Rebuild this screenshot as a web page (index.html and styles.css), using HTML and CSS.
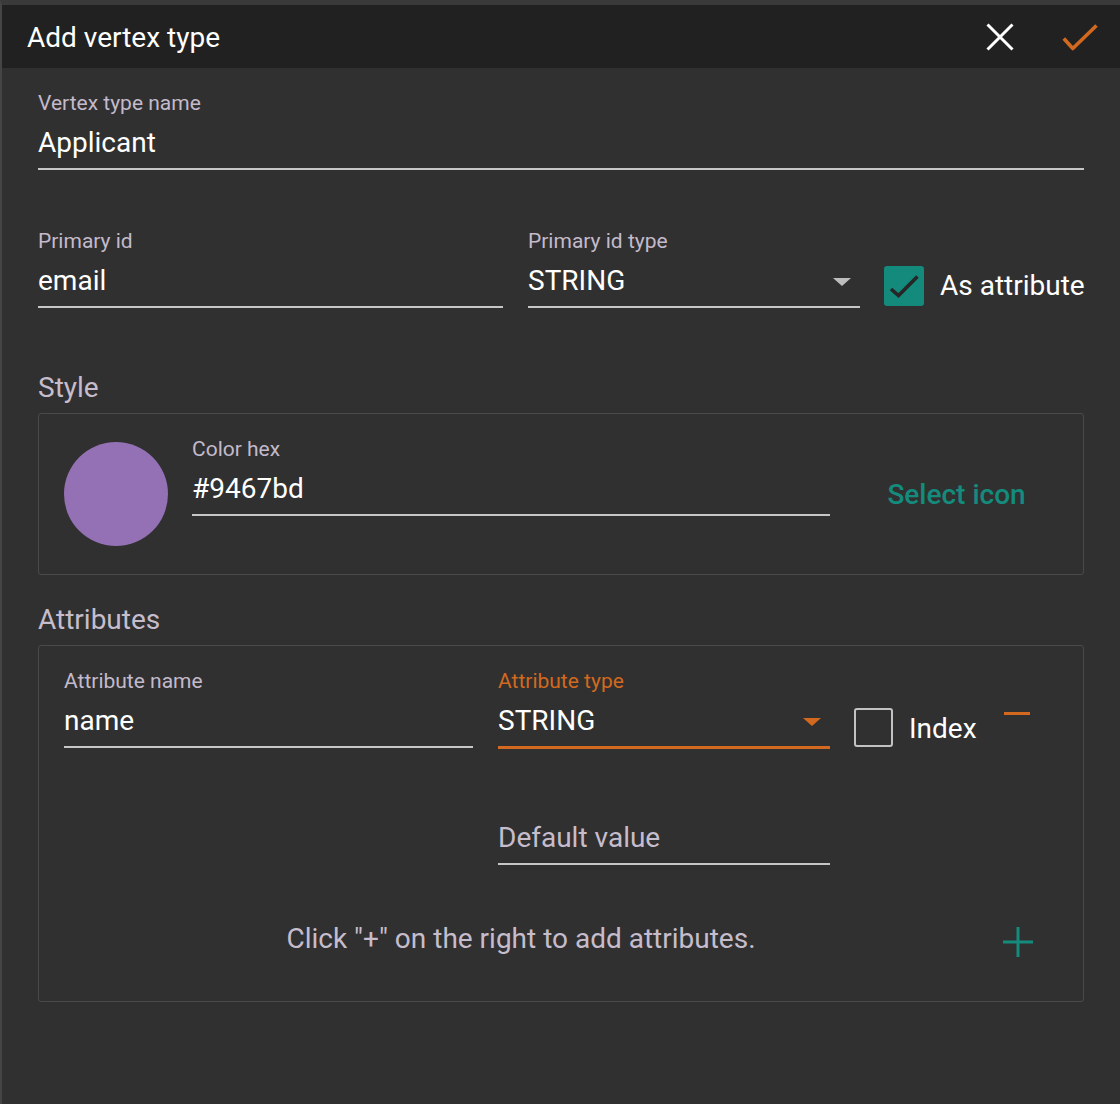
FILE: index.html
```html
<!DOCTYPE html>
<html lang="en">
<head>
<meta charset="utf-8">
<title>Add vertex type</title>
<link rel="stylesheet" href="styles.css">
</head>
<body>
<div class="dialog">
  <header class="bar">
    <h1 class="title">Add vertex type</h1>
    <div class="actions">
      <button class="icon-btn" aria-label="Close">
        <svg width="28" height="28" viewBox="0 0 28 28"><path d="M1.5 1.5 L26.5 26.5 M26.5 1.5 L1.5 26.5" stroke="#ffffff" stroke-width="3" fill="none"/></svg>
      </button>
      <button class="icon-btn" aria-label="Save">
        <svg width="36" height="28" viewBox="0 0 36 28"><path d="M1.8 15.5 L10.8 25.5 L34.5 2.5" stroke="#d2691e" stroke-width="3.6" fill="none" stroke-linejoin="round"/></svg>
      </button>
    </div>
  </header>

  <main class="content">
    <div class="field">
      <div class="label">Vertex type name</div>
      <div class="control">Applicant</div>
    </div>

    <div class="row">
      <div class="field f-id">
        <div class="label">Primary id</div>
        <div class="control">email</div>
      </div>
      <div class="field f-type">
        <div class="label">Primary id type</div>
        <div class="control"><span>STRING</span><span class="arrow"></span></div>
      </div>
      <div class="check-group">
        <span class="cbox on"><svg width="40" height="40" viewBox="0 0 40 40"><path d="M7 23 L14.5 29.5 L33.5 10.5" stroke="#262626" stroke-width="3.6" fill="none"/></svg></span>
        <span class="check-text">As attribute</span>
      </div>
    </div>

    <h2 class="section-title">Style</h2>
    <div class="box style-box">
      <div class="swatch"></div>
      <div class="field f-color">
        <div class="label">Color hex</div>
        <div class="control">#9467bd</div>
      </div>
      <div class="select-icon">Select icon</div>
    </div>

    <h2 class="section-title attr-title">Attributes</h2>
    <div class="box attr-box">
      <div class="attr-row">
        <div class="attr-grid">
          <div class="field">
            <div class="label">Attribute name</div>
            <div class="control">name</div>
          </div>
          <div class="field focused">
            <div class="label">Attribute type</div>
            <div class="control"><span>STRING</span><span class="arrow"></span></div>
          </div>
          <div class="check-group index-group">
            <span class="cbox off"></span>
            <span class="check-text">Index</span>
          </div>
          <div class="field f-default">
            <div class="label">&nbsp;</div>
            <div class="control placeholder">Default value</div>
          </div>
        </div>
        <div class="side-btn"><span class="minus"></span></div>
      </div>
      <div class="hint-row">
        <span class="hint">Click "+" on the right to add attributes.</span>
        <div class="side-btn plus-btn">
          <svg width="30" height="30" viewBox="0 0 30 30"><path d="M15 0 V30 M0 15 H30" stroke="#148b7d" stroke-width="3" fill="none"/></svg>
        </div>
      </div>
    </div>
  </main>
</div>
</body>
</html>
```

FILE: styles.css
```css
* { box-sizing: border-box; }
html, body { margin: 0; }
body {
  background: #303030;
  font-family: Roboto, "Noto Sans", sans-serif;
  color: #ffffff;
}
.dialog {
  min-height: 1104px;
  border-left: 2px solid #454545;
  border-top: 5px solid #3a3a3a;
}
.bar {
  height: 63px;
  background: #212121;
  display: flex;
  align-items: center;
  justify-content: space-between;
  padding: 3px 22px 0 25px;
}
.title {
  margin: 0;
  font-size: 28px;
  font-weight: 400;
  line-height: 36px;
}
.actions { display: flex; align-items: center; gap: 48px; margin-top: -2px; }
.icon-btn {
  background: none;
  border: 0;
  padding: 0;
  display: flex;
  cursor: pointer;
}
.content { padding: 23px 36px 0 36px; }

.field { display: flex; flex-direction: column; }
.label {
  font-size: 21px;
  line-height: 24px;
  color: #c3bacb;
}
.control {
  display: flex;
  align-items: center;
  justify-content: space-between;
  padding: 10px 0 7px;
  border-bottom: 2px solid #c6c6c6;
  font-size: 28px;
  line-height: 36px;
  color: #ffffff;
}
.arrow {
  width: 0;
  height: 0;
  margin-right: 9px;
  margin-top: 2px;
  border-left: 9px solid transparent;
  border-right: 9px solid transparent;
  border-top: 8px solid #bdbdbd;
}
.placeholder { color: #c6bdcc; }

.focused .label { color: #d2691e; }
.focused .control { border-bottom: 3px solid #d2691e; padding-bottom: 7px; }
.focused .arrow { border-top-color: #d2691e; }

.row {
  display: flex;
  align-items: flex-start;
  gap: 25px;
  margin-top: 59px;
}
.f-id { width: 465px; flex: none; }
.f-type { width: 332px; flex: none; }
.check-group {
  display: flex;
  align-items: center;
  gap: 16px;
  margin-top: 37px;
  margin-left: -1px;
}
.cbox {
  width: 40px;
  height: 40px;
  border-radius: 3px;
  flex: none;
  display: flex;
}
.cbox.on { background: #138a7c; }
.cbox.off {
  width: 39px;
  height: 39px;
  border: 2.5px solid #c2c2c2;
}
.check-text { font-size: 28px; line-height: 36px; white-space: nowrap; }
.index-group { margin-top: 39px; margin-left: -1px; gap: 16px; }
.index-group .check-text { margin-top: 3px; }

.section-title {
  margin: 62px 0 6.6px;
  font-size: 28px;
  font-weight: 400;
  line-height: 36px;
  color: #c6bdcc;
}
.attr-title { margin-top: 27.4px; }

.box { border: 1px solid #4a4a4a; border-radius: 3px; }
.style-box {
  height: 162px;
  display: flex;
  align-items: center;
  padding-left: 25px;
}
.swatch {
  width: 104px;
  height: 104px;
  border-radius: 50%;
  background: #9470b4;
  flex: none;
}
.f-color { width: 638px; margin-left: 24px; margin-bottom: 34px; }
.select-icon {
  flex: 1;
  text-align: center;
  color: #148b7d;
  font-size: 28px;
  font-weight: 500;
  margin-top: 2px;
}

.attr-box { padding: 23.3px 41px 44px 25px; }
.attr-row { display: flex; gap: 17px; }
.attr-grid {
  flex: 1;
  display: grid;
  grid-template-columns: 409px 332px 1fr;
  column-gap: 25px;
  row-gap: 37px;
  align-items: start;
}
.f-default { grid-column: 2; }
.side-btn {
  width: 48px;
  flex: none;
  display: flex;
  justify-content: center;
}
.minus {
  width: 26px;
  height: 3px;
  margin-top: 43px;
  margin-left: -2px;
  background: #d2691e;
}
.plus-btn { margin-top: 6px; margin-left: -1px; }
.hint-row {
  display: flex;
  gap: 17px;
  align-items: center;
  margin-top: 56px;
}
.hint {
  flex: 1;
  text-align: center;
  font-size: 28px;
  line-height: 36px;
  color: #c6bdcc;
}
```
